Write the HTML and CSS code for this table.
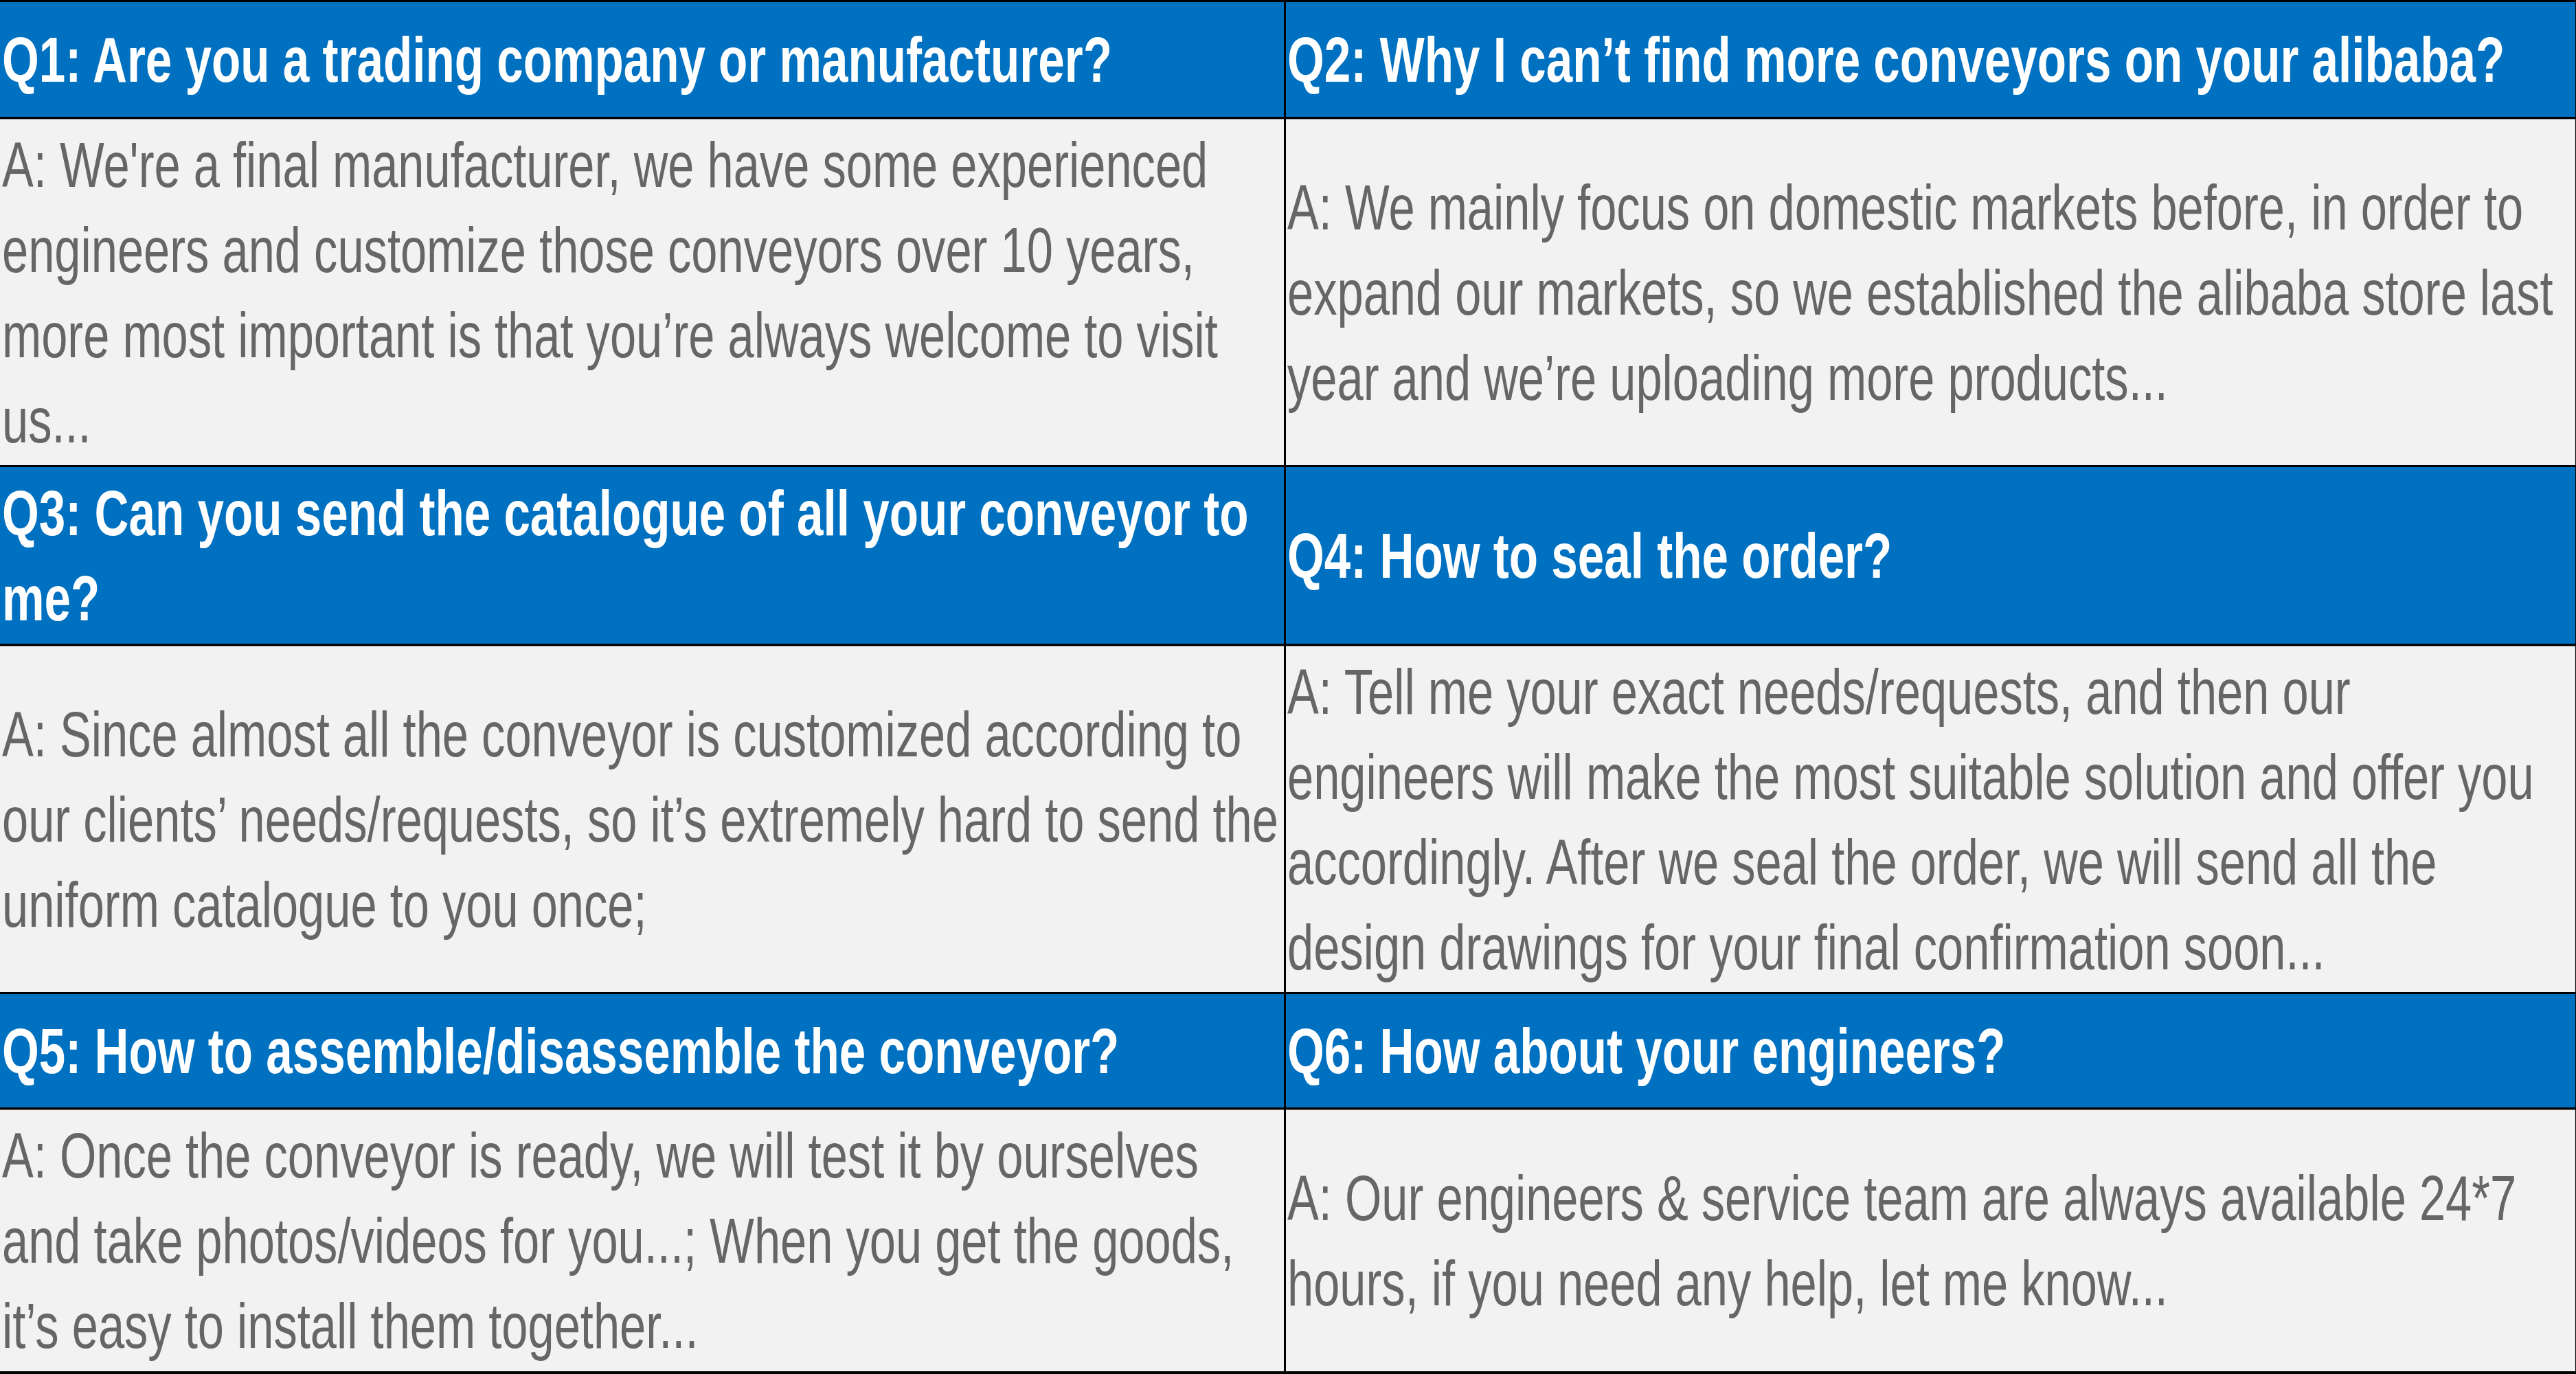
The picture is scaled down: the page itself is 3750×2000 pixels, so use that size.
FILE: index.html
```html
<!DOCTYPE html>
<html lang="en">
<head>
<meta charset="utf-8">
<title>FAQ</title>
<link rel="stylesheet" href="styles.css">
</head>
<body>
<div class="faq">
  <div class="cell q"><p>Q1: Are you a trading company or manufacturer?</p></div>
  <div class="cell q"><p>Q2: Why I can’t find more conveyors on your alibaba?</p></div>
  <div class="cell a"><p>A: We're a final manufacturer, we have some experienced engineers and customize those conveyors over 10 years, more most important is that you’re always welcome to visit us...</p></div>
  <div class="cell a"><p>A: We mainly focus on domestic markets before, in order to expand our markets, so we established the alibaba store last year and we’re uploading more products...</p></div>
  <div class="cell q"><p>Q3: Can you send the catalogue of all your conveyor to me?</p></div>
  <div class="cell q"><p>Q4: How to seal the order?</p></div>
  <div class="cell a"><p>A: Since almost all the conveyor is customized according to our clients’ needs/requests, so it’s extremely hard to send the uniform catalogue to you once;</p></div>
  <div class="cell a"><p>A: Tell me your exact needs/requests, and then our engineers will make the most suitable solution and offer you accordingly. After we seal the order, we will send all the design drawings for your final confirmation soon...</p></div>
  <div class="cell q"><p>Q5: How to assemble/disassemble the conveyor?</p></div>
  <div class="cell q"><p>Q6: How about your engineers?</p></div>
  <div class="cell a"><p>A: Once the conveyor is ready, we will test it by ourselves and take photos/videos for you...; When you get the goods, it’s easy to install them together...</p></div>
  <div class="cell a"><p>A: Our engineers &amp; service team are always available 24*7 hours, if you need any help, let me know...</p></div>
</div>
</body>
</html>
```
FILE: styles.css
```css
html, body {
  margin: 0;
  padding: 0;
  background: #000;
}
body {
  width: 3750px;
  height: 2000px;
  overflow: hidden;
}
.faq {
  display: grid;
  grid-template-columns: 1869px 1877px;
  grid-template-rows: 167px 504px 257px 504px 165px 381px;
  column-gap: 3px;
  row-gap: 3px;
  padding: 3px 1px 4px 0;
  background: #000;
  font-family: "Liberation Sans", Arial, sans-serif;
  font-size: 92px;
  line-height: 124px;
}
.cell {
  box-sizing: border-box;
  display: flex;
  align-items: center;
  overflow: hidden;
}
.cell:nth-child(odd) {
  padding: 0 0 0 3px;
}
.cell:nth-child(even) {
  padding: 0 12px 0 2px;
}
.cell p {
  flex: none;
  margin: 0;
  transform-origin: left center;
}
.q {
  background: #0070c0;
  color: #fff;
  font-weight: bold;
}
.q p {
  width: calc(100% / 0.752);
  transform: scaleX(0.752);
}
.a {
  background: #f2f2f2;
  color: #666;
  border-top: 1px solid #9c9c9c;
}
.a p {
  width: calc(100% / 0.746);
  transform: scaleX(0.746);
}
```
